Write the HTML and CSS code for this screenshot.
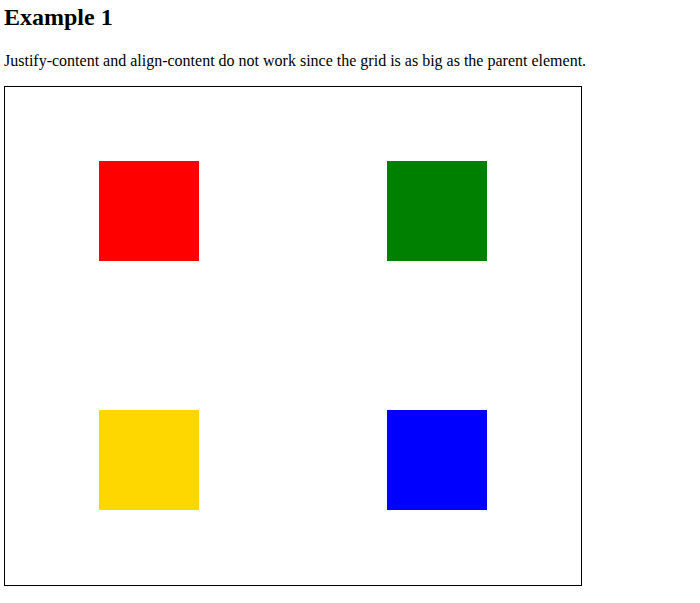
FILE: index.html
```html
<!DOCTYPE html>
<html>
<head>
<meta charset="utf-8">
<link rel="stylesheet" href="styles.css">
</head>
<body>
<h2 class="title">Example 1</h2>
<p class="desc">Justify-content and align-content do not work since the grid is as big as the parent element.</p>
<div class="grid">
  <div class="cell red"></div>
  <div class="cell green"></div>
  <div class="cell gold"></div>
  <div class="cell blue"></div>
</div>
</body>
</html>
```
FILE: styles.css
```css
body {
  margin: 4px;
  font-family: "Liberation Serif", serif;
  color: #000;
  background: #fff;
}
.title {
  font-size: 24px;
  font-weight: bold;
  margin: 0 0 20.6px 0;
}
.desc {
  font-size: 16px;
  margin: 0 0 16px 0;
}
.grid {
  width: 576px;
  height: 498px;
  border: 1px solid #000;
  display: grid;
  grid-template-columns: 1fr 1fr;
  grid-template-rows: 1fr 1fr;
  place-items: center;
}
.cell {
  width: 100px;
  height: 100px;
}
.red { background: red; }
.green { background: green; }
.gold { background: gold; }
.blue { background: blue; }
```
